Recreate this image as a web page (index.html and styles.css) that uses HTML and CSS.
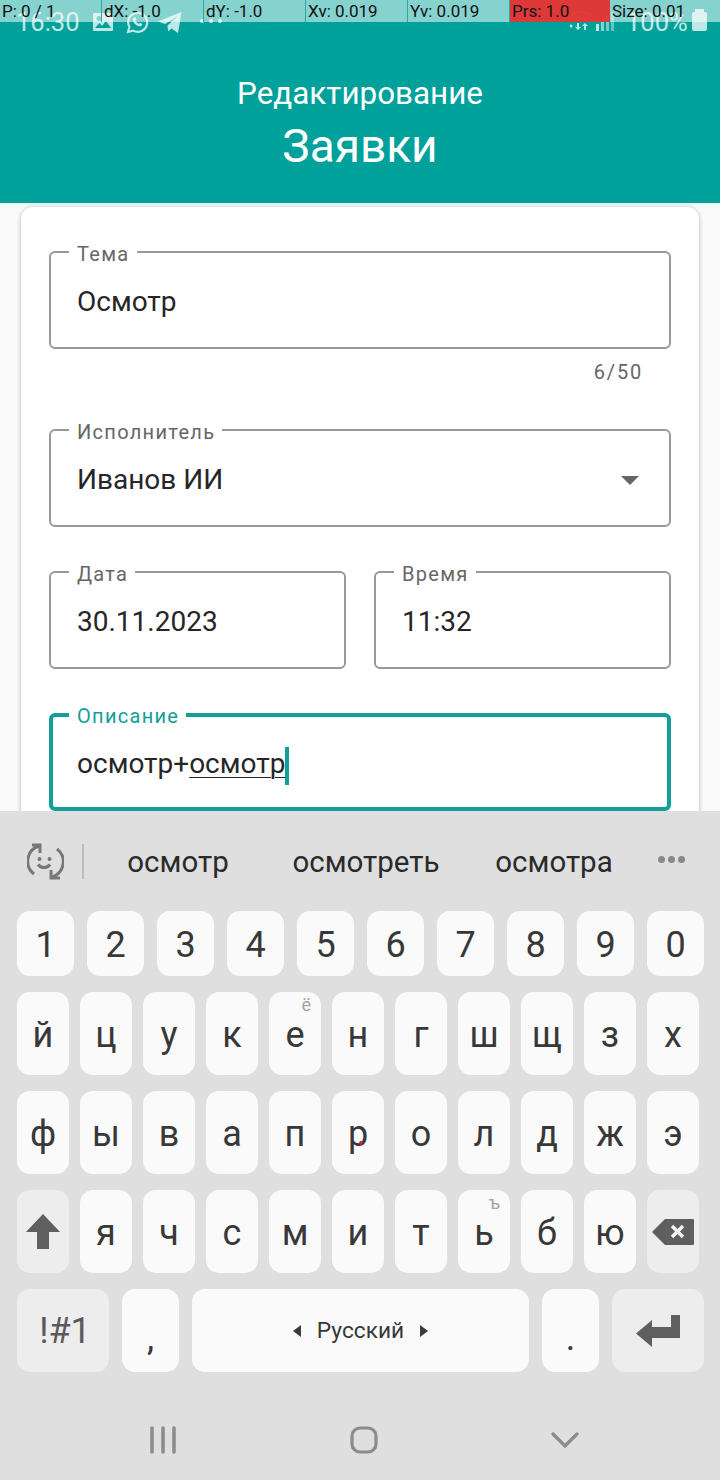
FILE: index.html
```html
<!DOCTYPE html>
<html lang="ru">
<head>
    <meta charset="UTF-8">
    <meta name="viewport" content="width=device-width, initial-scale=1.0">
    <title>Редактирование заявки</title>
    <link rel="stylesheet" href="styles.css">
</head>
<body>
    <div class="screen">
        <!-- Android status bar, sits under the pointer overlay -->
        <div class="status-bar">
            <span class="clock">16:30</span>
            <svg class="st-pic" width="20" height="18" viewBox="0 0 20 18"><path fill="#fff" d="M1 0h18a1 1 0 0 1 1 1v16a1 1 0 0 1-1 1H1a1 1 0 0 1-1-1V1a1 1 0 0 1 1-1zm1 15h16l-5-7-4 5-2.500-3zM6 3a2.500 2.500 0 1 0 0 5 2.500 2.500 0 0 0 0-5z" fill-rule="evenodd"/></svg>
            <svg class="st-wa" width="23" height="23" viewBox="0 0 23 23"><path fill="none" stroke="#fff" stroke-width="2.200" d="M2 21l1.400-5A9.500 9.500 0 1 1 7 19.600z"/><path fill="#fff" d="M8 6.500c1-1 1.600-.6 2 .5l.5 1.300-1 1.300c.7 1.500 1.800 2.500 3.300 3.200l1.300-1 1.700.9c.6.400.5 1.200 0 1.800-1 1-2.500 1.200-4.300.3-2.300-1.100-4-3-4.800-5.200-.4-1.200 0-2.200 1.300-3.100z"/></svg>
            <svg class="st-tg" width="24" height="21" viewBox="0 0 24 21"><path fill="#fff" d="M0 9.500L23.500 0 20 21l-6.500-4.500-3.500 3-.5-6L20 4 7 12z"/></svg>
            <span class="st-dots"><i></i><i></i><i></i></span>
            <svg class="st-wifi" width="22" height="21" viewBox="0 0 22 21"><path fill="none" stroke="#fff" stroke-width="2" d="M1 7a14 14 0 0 1 20 0M5 11a9 9 0 0 1 12 0"/><circle cx="1" cy="17" r="1.500" fill="#fff"/><path fill="#fff" d="M7 14h2v4h2l-3 3-3-3h2zM14 21h2v-4h2l-3-3-3 3h2z"/></svg>
            <span class="st-signal"><i></i><i></i><i></i><i></i></span>
            <span class="st-level">100%</span>
            <span class="st-battery"></span>
        </div>

        <!-- developer option: pointer location -->
        <div class="pointer-bar">
            <div class="pointer-cell">P: 0 / 1</div>
            <div class="pointer-cell">dX: -1.0</div>
            <div class="pointer-cell">dY: -1.0</div>
            <div class="pointer-cell">Xv: 0.019</div>
            <div class="pointer-cell">Yv: 0.019</div>
            <div class="pointer-cell pointer-red">Prs: 1.0</div>
            <div class="pointer-cell">Size: 0.01</div>
        </div>

        <header class="app-header">
            <div class="header-sub">Редактирование</div>
            <div class="header-title">Заявки</div>
        </header>

        <main class="content">
            <div class="card">
                <fieldset class="field">
                    <legend>Тема</legend>
                    <div class="field-value">Осмотр</div>
                </fieldset>
                <div class="counter">6/50</div>

                <fieldset class="field">
                    <legend>Исполнитель</legend>
                    <div class="field-value field-select">
                        <span>Иванов ИИ</span>
                        <span class="select-arrow"></span>
                    </div>
                </fieldset>

                <div class="field-row">
                    <fieldset class="field">
                        <legend>Дата</legend>
                        <div class="field-value">30.11.2023</div>
                    </fieldset>
                    <fieldset class="field">
                        <legend>Время</legend>
                        <div class="field-value">11:32</div>
                    </fieldset>
                </div>

                <fieldset class="field field-focus">
                    <legend>Описание</legend>
                    <div class="field-value">осмотр+<span class="composing">осмотр</span><span class="caret"></span></div>
                </fieldset>
            </div>
        </main>

        <section class="keyboard">
            <div class="suggest-bar">
                <svg class="suggest-icon" width="37" height="37" viewBox="0 0 37 37">
                    <g fill="none" stroke="#777" stroke-width="3">
                        <path d="M12 3A16 16 0 0 0 7 31"/>
                        <path d="M25 34A16 16 0 0 0 30 6"/>
                        <path d="M5 2H13V10"/>
                        <path d="M24 27V35H33"/>
                        <path d="M11 21.500c3 4 9 4 12 0"/>
                    </g>
                    <circle cx="12.500" cy="16" r="2" fill="#777"/>
                    <circle cx="22.500" cy="16" r="2" fill="#777"/>
                </svg>
                <span class="suggest-sep"></span>
                <span class="suggest-word">осмотр</span>
                <span class="suggest-word">осмотреть</span>
                <span class="suggest-word">осмотра</span>
                <span class="suggest-more"><i></i><i></i><i></i></span>
            </div>

            <div class="key-row num-row">
                <div class="key">1</div><div class="key">2</div><div class="key">3</div><div class="key">4</div><div class="key">5</div>
                <div class="key">6</div><div class="key">7</div><div class="key">8</div><div class="key">9</div><div class="key">0</div>
            </div>
            <div class="key-row">
                <div class="key">й</div><div class="key">ц</div><div class="key">у</div><div class="key">к</div>
                <div class="key">е<span class="hint">ё</span></div>
                <div class="key">н</div><div class="key">г</div><div class="key">ш</div><div class="key">щ</div><div class="key">з</div><div class="key">х</div>
            </div>
            <div class="key-row">
                <div class="key">ф</div><div class="key">ы</div><div class="key">в</div><div class="key">а</div><div class="key">п</div>
                <div class="key">р<span class="touch-dot"></span></div>
                <div class="key">о</div><div class="key">л</div><div class="key">д</div><div class="key">ж</div><div class="key">э</div>
            </div>
            <div class="key-row">
                <div class="key key-fn">
                    <svg width="34" height="35" viewBox="0 0 34 35"><path fill="#5f5f5f" d="M17 0l17 18H23v17H11V18H0z"/></svg>
                </div>
                <div class="key">я</div><div class="key">ч</div><div class="key">с</div><div class="key">м</div><div class="key">и</div><div class="key">т</div>
                <div class="key">ь<span class="hint">ъ</span></div>
                <div class="key">б</div><div class="key">ю</div>
                <div class="key key-fn">
                    <svg width="42" height="26" viewBox="0 0 42 26"><path fill="#5f5f5f" d="M13 0h28a1 1 0 0 1 1 1v24a1 1 0 0 1-1 1H13L0 13z"/><path fill="none" stroke="#f4f4f4" stroke-width="3.500" d="M20 7l11 11M31 7L20 18"/></svg>
                </div>
            </div>
            <div class="key-row bottom-row">
                <div class="key key-fn key-sym">!#1</div>
                <div class="key key-punct">,</div>
                <div class="key key-space">
                    <span class="lang-arrow lang-left"></span>
                    <span>Русский</span>
                    <span class="lang-arrow lang-right"></span>
                </div>
                <div class="key key-punct">.</div>
                <div class="key key-fn">
                    <svg width="44" height="32" viewBox="0 0 44 32"><path fill="#5f5f5f" d="M16 5v7h19V0h9v23H16v9L0 18.500z"/></svg>
                </div>
            </div>

            <nav class="nav-bar">
                <div class="nav-item">
                    <svg width="26" height="28" viewBox="0 0 26 28"><path fill="none" stroke="#8b8b8b" stroke-width="3.500" stroke-linecap="round" d="M2 2v24M13 2v24M24 2v24"/></svg>
                </div>
                <div class="nav-item">
                    <svg width="28" height="28" viewBox="0 0 28 28"><rect x="2" y="2" width="24" height="24" rx="8" fill="none" stroke="#8b8b8b" stroke-width="3.200"/></svg>
                </div>
                <div class="nav-item">
                    <svg width="28" height="18" viewBox="0 0 28 18"><path fill="none" stroke="#8b8b8b" stroke-width="3.200" stroke-linecap="round" d="M2 3l12 12L26 3"/></svg>
                </div>
            </nav>
        </section>
    </div>
</body>
</html>
```

FILE: styles.css
```css
* {
    box-sizing: border-box;
}

body {
    margin: 0;
    font-family: Roboto, "Noto Sans", sans-serif;
    background: #fafafa;
}

.screen {
    position: relative;
    width: 720px;
    height: 1480px;
    display: flex;
    flex-direction: column;
    overflow: hidden;
}

/* Status bar */
.status-bar {
    position: absolute;
    top: 0;
    left: 0;
    width: 720px;
    height: 40px;
    opacity: 0.75;
    color: #fff;
}

.status-bar > * {
    position: absolute;
}

.clock {
    left: 16px;
    top: 5px;
    font-size: 25.500px;
    line-height: 34px;
}

.st-pic { left: 93px; top: 13px; }
.st-wa { left: 126px; top: 11px; }
.st-tg { left: 158px; top: 12px; }
.st-wifi { left: 570px; top: 9px; }

.st-dots {
    left: 200px;
    top: 19px;
    display: flex;
    gap: 5px;
}

.st-dots i {
    width: 4px;
    height: 4px;
    border-radius: 50%;
    background: #fff;
}

.st-signal {
    left: 596px;
    top: 12px;
    height: 19px;
    display: flex;
    align-items: flex-end;
    gap: 2px;
}

.st-signal i {
    width: 3px;
    background: #fff;
}

.st-signal i:nth-child(1) { height: 7px; }
.st-signal i:nth-child(2) { height: 11px; opacity: 0.7; }
.st-signal i:nth-child(3) { height: 15px; opacity: 0.6; }
.st-signal i:nth-child(4) { height: 19px; opacity: 0.5; }

.st-level {
    left: 626px;
    top: 5px;
    font-size: 25.500px;
    line-height: 34px;
}

.st-battery {
    left: 692px;
    top: 12px;
    width: 15px;
    height: 19px;
    border-radius: 2px;
    background: #fff;
}

.st-battery::before {
    content: '';
    position: absolute;
    left: 3px;
    top: -3px;
    width: 9px;
    height: 3px;
    background: #fff;
}

/* Pointer location overlay */
.pointer-bar {
    position: absolute;
    top: 0;
    left: 0;
    width: 720px;
    height: 22px;
    display: grid;
    grid-template-columns: repeat(5, 102px) 100px 1fr;
    background: rgba(255, 255, 255, 0.52);
    z-index: 2;
}

.pointer-cell {
    padding-left: 2px;
    font-size: 17px;
    line-height: 22px;
    color: #111;
    white-space: nowrap;
    border-right: 1px solid #2ea8a4;
}

.pointer-cell:last-child {
    border-right: none;
}

.pointer-red {
    background: rgba(229, 45, 45, 0.93);
    border-right: none;
}

/* Header */
.app-header {
    height: 203px;
    flex-shrink: 0;
    padding-top: 73px;
    background: #00a19b;
    color: #fff;
    text-align: center;
}

.header-sub {
    font-size: 31.400px;
    line-height: 41px;
}

.header-title {
    font-size: 46px;
    line-height: 64px;
}

/* Form */
.content {
    height: 608px;
    flex-shrink: 0;
    padding: 4px 21px 0;
    overflow: hidden;
    background: linear-gradient(#eaf7f7, #fafafa 6px);
}

.card {
    height: 700px;
    padding: 33px 28px 0;
    background: #fff;
    border-radius: 12px;
    box-shadow: 0 1px 5px rgba(0, 0, 0, 0.28);
}

.field {
    height: 109px;
    min-width: 0;
    margin: 0;
    padding: 0 26px;
    border: 2px solid #999;
    border-radius: 6px;
}

.field legend {
    margin-left: -8px;
    padding: 4px 7px 0 8px;
    font-size: 20px;
    line-height: 20px;
    letter-spacing: 1.300px;
    color: #666;
}

.field-value {
    font-size: 28px;
    line-height: 76px;
    color: #262626;
    white-space: nowrap;
}

.field-select {
    display: flex;
    justify-content: space-between;
    align-items: center;
    padding-right: 4px;
}

.select-arrow {
    width: 0;
    height: 0;
    border-left: 9px solid transparent;
    border-right: 9px solid transparent;
    border-top: 9px solid #666;
}

.counter {
    height: 69px;
    padding: 11px 28px 0 0;
    text-align: right;
    font-size: 20px;
    line-height: 24px;
    letter-spacing: 1.800px;
    color: #666;
}

.field-row {
    display: grid;
    grid-template-columns: 1fr 1fr;
    gap: 28px;
    margin: 33px 0 35px;
}

.field-focus {
    height: 107px;
    padding: 0 24px;
    border: 4px solid #139e99;
}

.field-focus legend {
    padding-top: 2px;
    color: #139e99;
}

.field-focus .field-value {
    line-height: 76px;
}

.composing {
    text-decoration: underline;
    text-decoration-thickness: 1px;
    text-underline-offset: 4px;
}

.caret {
    display: inline-block;
    width: 4px;
    height: 38px;
    vertical-align: middle;
    background: #139e99;
}

/* Keyboard */
.keyboard {
    position: relative;
    flex: 1;
    background: #dfdfdf;
}

.suggest-bar {
    height: 100px;
    display: flex;
    align-items: center;
    padding-left: 27px;
}

.suggest-icon {
    flex-shrink: 0;
}

.suggest-sep {
    width: 2px;
    height: 35px;
    margin: 0 0 0 18px;
    background: #bdbdbd;
}

.suggest-word {
    width: 188px;
    flex-shrink: 0;
    padding-top: 2px;
    text-align: center;
    font-size: 29.500px;
    color: #2a2a2a;
}

.suggest-more {
    display: flex;
    gap: 3px;
    margin: 0 0 3px 10px;
}

.suggest-more i {
    width: 7px;
    height: 7px;
    border-radius: 50%;
    background: #888;
}

.key-row {
    display: flex;
    gap: 11px;
    width: 682px;
    height: 83px;
    margin: 0 0 16px 17px;
}

.num-row {
    gap: 13px;
    width: 687px;
    height: 65px;
}

.key {
    position: relative;
    flex: 1;
    display: flex;
    align-items: center;
    justify-content: center;
    padding-top: 2px;
    background: #fafafa;
    border-radius: 13px;
    font-size: 36px;
    color: #383838;
}

.key-fn {
    padding-top: 0;
    background: #ededed;
}

.hint {
    position: absolute;
    top: 3px;
    right: 10px;
    font-size: 18px;
    line-height: 20px;
    color: #a5a5a5;
}

.touch-dot {
    position: absolute;
    left: 27px;
    top: 50px;
    width: 4px;
    height: 4px;
    border-radius: 50%;
    background: #c8242c;
}

.bottom-row {
    gap: 13px;
    width: 687px;
    margin-bottom: 0;
}

.bottom-row .key {
    flex: none;
    width: 57px;
}

.bottom-row .key-fn {
    width: 92px;
}

.bottom-row .key-space {
    width: 337px;
    gap: 16px;
    padding-top: 0;
    font-size: 22.700px;
}

.key-sym {
    padding-left: 4px;
    font-size: 36px;
    color: #5a5a5a;
}

.key-punct {
    padding-top: 14px;
}

.lang-arrow {
    width: 0;
    height: 0;
    border-top: 6px solid transparent;
    border-bottom: 6px solid transparent;
}

.lang-left {
    border-right: 8px solid #3a3a3a;
}

.lang-right {
    border-left: 8px solid #3a3a3a;
}

/* Navigation bar */
.nav-bar {
    height: 108px;
    display: flex;
    justify-content: center;
    padding: 0 0 2px;
    margin-left: 8px;
}

.nav-item {
    width: 201px;
    height: 136px;
    display: flex;
    align-items: center;
    justify-content: center;
}
```
